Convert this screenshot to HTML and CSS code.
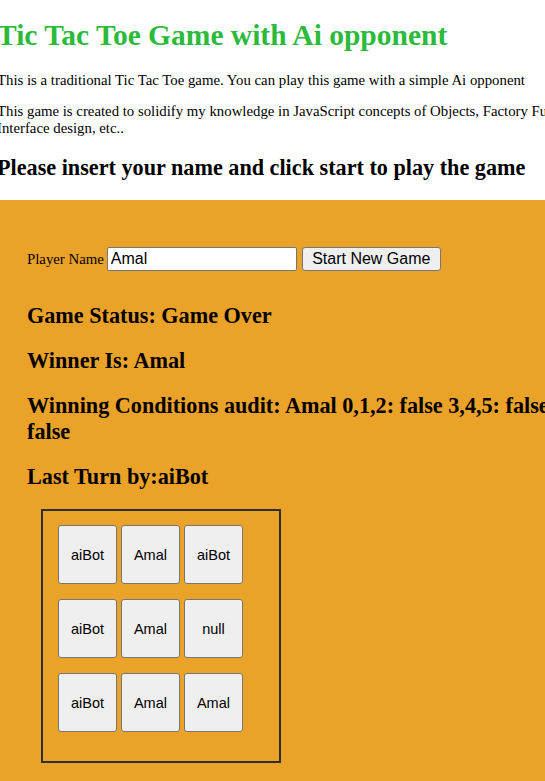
FILE: index.html
```html
<!DOCTYPE html>
<html lang="en">
<head>
<meta charset="utf-8">
<title>Tic Tac Toe Game with Ai opponent</title>
<link rel="stylesheet" href="styles.css">
</head>
<body>
<h1 class="title">Tic Tac Toe Game with Ai opponent</h1>
<p class="intro">This is a traditional Tic Tac Toe game. You can play this game with a simple Ai opponent</p>
<p class="intro">This game is created to solidify my knowledge in JavaScript concepts of Objects, Factory Functions, and User Interface design, etc..</p>
<h2 class="prompt">Please insert your name and click start to play the game</h2>
<section class="game">
  <form class="player-form">
    <label class="player-label" for="player">Player Name</label>
    <input class="player-input" id="player" type="text" value="Amal">
    <button class="start-btn" type="button">Start New Game</button>
  </form>
  <h2 class="status">Game Status: Game Over</h2>
  <h2 class="status">Winner Is: Amal</h2>
  <h2 class="status">Winning Conditions audit: Amal 0,1,2: false 3,4,5: false 6,7,8: false</h2>
  <h2 class="status">Last Turn by:aiBot</h2>
  <div class="board">
    <button class="cell" type="button">aiBot</button>
    <button class="cell" type="button">Amal</button>
    <button class="cell" type="button">aiBot</button>
    <button class="cell" type="button">aiBot</button>
    <button class="cell" type="button">Amal</button>
    <button class="cell" type="button">null</button>
    <button class="cell" type="button">aiBot</button>
    <button class="cell" type="button">Amal</button>
    <button class="cell" type="button">Amal</button>
  </div>
</section>
</body>
</html>
```
FILE: styles.css
```css
html {
  overflow: hidden;
  background: #ffffff;
}

body {
  margin: 0 0 0 -3px;
  width: 670px;
  font-family: "Liberation Serif", "Times New Roman", serif;
  color: #000000;
}

.title {
  margin: 17.5px 0 20px;
  font-size: 29.5px;
  line-height: 34px;
  font-weight: bold;
  color: #2cba3c;
}

.intro {
  margin: 14.2px 0;
  font-size: 14.8px;
  line-height: 17px;
}

.prompt {
  margin: 18.8px 0 18.5px;
  font-size: 22.2px;
  line-height: 26px;
  font-weight: bold;
}

.game {
  background: #eba228;
  padding: 47px 30px 40px;
}

.player-form {
  display: flex;
  align-items: baseline;
  margin: 0 0 31.8px;
}

.player-label {
  font-size: 14.8px;
  line-height: 17px;
}

.player-input {
  box-sizing: border-box;
  width: 190px;
  height: 24px;
  margin: 0 0 0 3px;
  padding: 0 3px;
  border: 1px solid #767676;
  border-radius: 2px;
  background: #ffffff;
  font-family: "Liberation Sans", Arial, sans-serif;
  font-size: 16px;
  color: #000000;
}

.start-btn {
  box-sizing: border-box;
  height: 24px;
  margin: 0 0 0 5px;
  padding: 0 9.3px;
  border: 1px solid #767676;
  border-radius: 3px;
  background: #efefef;
  font-family: "Liberation Sans", Arial, sans-serif;
  font-size: 16px;
  color: #000000;
}

.status {
  margin: 19px 0;
  font-size: 22.2px;
  line-height: 26px;
  font-weight: bold;
}

.board {
  box-sizing: border-box;
  width: 240px;
  margin: 19px 0 0 14px;
  padding: 14.7px 37px 29.6px 15.3px;
  border: 2px solid #2e2e2e;
  display: grid;
  grid-template-columns: repeat(3, 58.4px);
  grid-auto-rows: 58.4px;
  column-gap: 4.6px;
  row-gap: 15.6px;
}

.cell {
  box-sizing: border-box;
  margin: 0;
  padding: 0;
  border: 1px solid #767676;
  border-radius: 3px;
  background: #efefef;
  font-family: "Liberation Sans", Arial, sans-serif;
  font-size: 14.5px;
  color: #000000;
}
```
